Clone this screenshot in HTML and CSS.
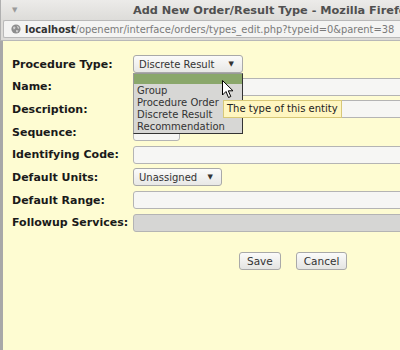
FILE: index.html
```html
<!DOCTYPE html>
<html>
  <head>
    <title>Add New Order/Result Type</title>
    <meta charset="utf-8" />
    <link rel="stylesheet" href="styles.css">
  </head>
  <body>
    <div class="titlebar">
      <span class="menu-arrow">&#9660;</span>
      <span class="title">Add New Order/Result Type - Mozilla Firefox</span>
    </div>
    <div class="urlbar">
      <div class="url">
        <svg class="globe" width="10" height="10" viewBox="0 0 10 10">
          <circle cx="5" cy="5" r="4.6" fill="#8d8d8d"/>
          <path d="M2 3 Q3.5 2 4.5 3 L4 5 L2.5 5.5 Z M5.5 1.5 Q7.5 2 8.5 4 L7 5 L6.5 3.5 Z M5 6 L7.5 6.5 L6.5 8.5 L5 8 Z" fill="#cfcfcf"/>
        </svg>
        <span class="host">localhost</span><span class="path">/openemr/interface/orders/types_edit.php?typeid=0&amp;parent=38</span>
      </div>
    </div>
    <div class="content">
      <div class="form">
        <label>Procedure Type:</label>
        <div class="field">
          <div class="select sel-type">Discrete Result<span class="caret">&#9660;</span></div>
        </div>
        <label>Name:</label>
        <div class="field"><div class="text"></div></div>
        <label>Description:</label>
        <div class="field"><div class="text"></div></div>
        <label>Sequence:</label>
        <div class="field"><div class="text short"></div></div>
        <label>Identifying Code:</label>
        <div class="field"><div class="text"></div></div>
        <label>Default Units:</label>
        <div class="field">
          <div class="select sel-units">Unassigned<span class="caret">&#9660;</span></div>
        </div>
        <label>Default Range:</label>
        <div class="field"><div class="text"></div></div>
        <label>Followup Services:</label>
        <div class="field"><div class="text disabled"></div></div>
      </div>
      <div class="buttons">
        <button class="btn">Save</button>
        <button class="btn">Cancel</button>
      </div>

      <!-- open dropdown of Procedure Type -->
      <div class="dropdown">
        <div class="opt active"></div>
        <div class="opt">Group</div>
        <div class="opt">Procedure Order</div>
        <div class="opt">Discrete Result</div>
        <div class="opt">Recommendation</div>
      </div>
      <div class="tooltip">The type of this entity</div>
      <svg class="cursor" width="12" height="19" viewBox="0 0 12 19">
        <path d="M0.5 0.5 L0.5 15 L4 11.5 L6.5 17.5 L8.8 16.5 L6.3 10.8 L11 10.8 Z" fill="#fff" stroke="#000" stroke-width="1" stroke-linejoin="round"/>
      </svg>
    </div>
  </body>
</html>
```

FILE: styles.css
```css
html, body {
  margin: 0;
  padding: 0;
  width: 400px;
  height: 350px;
  overflow: hidden;
  font-family: "DejaVu Sans", sans-serif;
}
.titlebar {
  height: 20px;
  background: linear-gradient(#ecebe9, #dddcd9);
  border-left: 1px solid #b0b0b0;
  display: flex;
  align-items: center;
  white-space: nowrap;
  overflow: hidden;
}
.menu-arrow {
  flex-shrink: 0;
  font-size: 7px;
  color: #9a9a9a;
  margin-left: 11px;
  width: 121px;
}
.title {
  font-weight: bold;
  font-size: 11.3px;
  color: #505050;
}
.urlbar {
  height: 20px;
  background: #dddcd9;
  border-left: 1px solid #b0b0b0;
  padding: 0 0 0 2px;
  border-bottom: 1px solid #b8b8b8;
}
.url {
  height: 18px;
  background: #f4f4f3;
  border: 1px solid #b9b9b9;
  border-right: none;
  border-radius: 2px 0 0 2px;
  display: flex;
  align-items: center;
  white-space: nowrap;
  font-family: "DejaVu Sans Condensed", "DejaVu Sans", sans-serif;
  font-size: 11px;
  box-sizing: border-box;
}
.globe {
  margin: 0 4px 0 7px;
}
.host {
  font-weight: bold;
  color: #333;
}
.path {
  color: #7a7a7a;
}
.content {
  position: relative;
  height: 309px;
  background: #fefcd2;
  border-left: 3px solid #a8a8a8;
  padding: 14px 0 0 9px;
  overflow: hidden;
}
.form {
  display: grid;
  grid-template-columns: 121px 300px;
  row-gap: 4.7px;
  grid-auto-rows: 18px;
}
.form label {
  font-weight: bold;
  font-size: 11px;
  color: #1a1a1a;
  align-self: center;
  white-space: nowrap;
}
.field {
  display: flex;
}
.text {
  width: 290px;
  height: 18px;
  box-sizing: border-box;
  border: 1px solid #b4b4b4;
  border-radius: 3px;
  background: #f6f6f4;
}
.text.short {
  width: 47px;
}
.text.disabled {
  background: #d6d6d4;
}
.select {
  height: 18px;
  box-sizing: border-box;
  border: 1px solid #a9a9a9;
  border-radius: 3px;
  background: linear-gradient(#fbfbfa, #e8e8e6);
  font-size: 10px;
  color: #333;
  padding-left: 5px;
  display: flex;
  align-items: center;
  justify-content: space-between;
  white-space: nowrap;
}
.sel-type {
  width: 110px;
}
.sel-units {
  width: 89px;
}
.caret {
  font-size: 7px;
  color: #333;
  margin-right: 8px;
}
.buttons {
  display: flex;
  gap: 15px;
  margin: 20px 0 0 227px;
}
.btn {
  height: 18px;
  padding: 0 7px;
  font-family: "DejaVu Sans", sans-serif;
  font-size: 10.5px;
  color: #333;
  border: 1px solid #a9a9a9;
  border-radius: 3px;
  background: linear-gradient(#fbfbfa, #e4e4e2);
}
.dropdown {
  position: absolute;
  left: 130px;
  top: 32px;
  width: 110px;
  height: 61px;
  box-sizing: border-box;
  background: #d7d7d5;
  border: 1px solid #9a9a9a;
  border-right-color: #333;
  border-bottom-color: #333;
  font-size: 10px;
  color: #333;
  line-height: 12px;
  padding-left: 3px;
}
.opt.active {
  height: 10px;
  margin: 0 0 1px -3px;
  background: #8aa76b;
}
.tooltip {
  position: absolute;
  left: 220px;
  top: 59px;
  height: 18px;
  box-sizing: border-box;
  padding: 0 3px;
  background: #fff6c0;
  border: 1px solid #d8c878;
  font-size: 10px;
  color: #222;
  line-height: 16px;
  white-space: nowrap;
}
.cursor {
  position: absolute;
  left: 219px;
  top: 39px;
}
```
